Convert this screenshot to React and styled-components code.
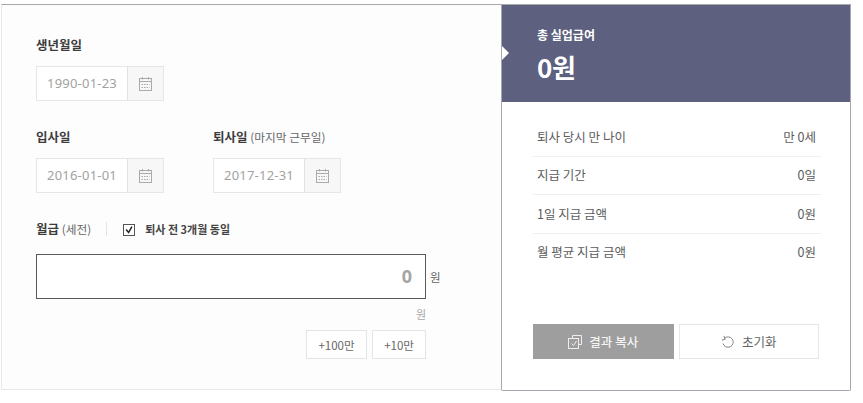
import React from "react";
import styled, { createGlobalStyle } from "styled-components";

const GlobalStyle = createGlobalStyle`
  html, body { margin: 0; padding: 0; background: #fff; }
  body { font-family: "Noto Sans CJK KR", "Noto Sans", sans-serif; color: #444; }
  * { box-sizing: border-box; }
`;

const Page = styled.div`
  width: 863px;
  height: 403px;
  padding: 4px 11px 0 1px;
  overflow: hidden;
`;

const Card = styled.div`
  display: flex;
  width: 851px;
  height: 387px;
`;

const Form = styled.div`
  width: 500px;
  height: 386px;
  background: #fdfdfd;
  border-top: 1px solid #a8a8a8;
  border-left: 1px solid #e8e8e8;
  border-bottom: 1px solid #e8e8e8;
  padding: 30px 0 0 34px;
`;

const FieldRow = styled.div`
  display: flex;
  gap: 49px;
  margin-bottom: 26px;
`;

const Field = styled.div`
  display: flex;
  flex-direction: column;
  gap: 11px;
`;

const Label = styled.div`
  font-size: 12.5px;
  line-height: 20px;
  font-weight: 700;
  color: #3c3c3c;
  height: 20px;
  white-space: nowrap;

  span {
    font-size: 11.7px;
    font-weight: 400;
    color: #666;
  }
`;

const DateGroup = styled.div`
  display: flex;
  width: 128px;
  height: 35px;
  border: 1px solid #e6e6e6;
  background: #fff;
`;

const DateValue = styled.div`
  flex: 1;
  font-size: 13px;
  line-height: 32px;
  color: #a2a2a2;
  text-align: center;
  letter-spacing: 0.2px;
  font-family: "Noto Sans", sans-serif;
`;

const DateAddon = styled.div`
  width: 36px;
  display: flex;
  align-items: center;
  justify-content: center;
  background: #f7f7f7;
  border-left: 1px solid #e2e2e2;
`;

const SalaryHead = styled.div`
  display: flex;
  align-items: center;
  height: 20px;
  margin-bottom: 15px;
`;

const Divider = styled.i`
  width: 1px;
  height: 14px;
  background: #e4e4e4;
  margin: 0 16px 0 15px;
`;

const CheckBox = styled.span`
  width: 12px;
  height: 12px;
  border: 1px solid #555;
  background: #fff;
  margin-right: 10px;
  position: relative;
  top: 1px;
  display: flex;
  align-items: center;
  justify-content: center;
`;

const CheckLabel = styled.span`
  font-size: 11px;
  font-weight: 700;
  color: #444;
`;

const SalaryRow = styled.div`
  display: flex;
  align-items: center;
  gap: 4px;
`;

const SalaryInput = styled.div`
  width: 390px;
  height: 45px;
  border: 1px solid #5a5a5a;
  background: #fff;
  display: flex;
  align-items: center;
  justify-content: flex-end;
  padding: 0 13px 1px 0;
  font-family: "Noto Sans", sans-serif;
  font-size: 18px;
  font-weight: 700;
  color: #a5a5a5;
`;

const Unit = styled.span`
  font-size: 11.5px;
  color: #666;
`;

const SubUnit = styled.div`
  width: 390px;
  text-align: right;
  font-size: 11px;
  line-height: 16px;
  color: #a8a8a8;
  margin: 7px 0 8px;
`;

const QuickRow = styled.div`
  width: 390px;
  display: flex;
  justify-content: flex-end;
  gap: 5px;
`;

const QuickButton = styled.button`
  width: ${(p) => p.$w}px;
  height: 29px;
  padding: 0;
  border: 1px solid #e4e4e4;
  background: #fff;
  font-family: inherit;
  font-size: 11.5px;
  color: #666;
`;

const Result = styled.div`
  width: 350px;
  height: 387px;
  background: #fff;
  border: 1px solid #a6a6ae;
  border-top-color: #a8a8a8;
  border-radius: 0 0 2px 2px;
  display: flex;
  flex-direction: column;
`;

const Summary = styled.div`
  height: 97px;
  background: #5d607e;
  color: #fff;
  padding: 20px 0 0 35px;
  position: relative;

  &::before {
    content: "";
    position: absolute;
    left: 0;
    top: 41px;
    border-left: 7px solid #fff;
    border-top: 7px solid transparent;
    border-bottom: 7px solid transparent;
  }
`;

const SummaryTitle = styled.div`
  font-size: 12px;
  line-height: 20px;
  font-weight: 700;
`;

const SummaryValue = styled.div`
  font-size: 26px;
  line-height: 32px;
  margin-top: 6px;
  font-weight: 700;
  letter-spacing: -0.3px;
`;

const DetailList = styled.div`
  margin: 16px 31px 0;
  width: 288px;
`;

const DetailRow = styled.div`
  height: 38.5px;
  padding: 0 5px 1px 4px;
  display: flex;
  align-items: center;
  justify-content: space-between;
  font-size: 12.5px;
  color: #5c5c5c;
  border-bottom: 1px solid ${(p) => (p.$last ? "transparent" : "#f0f0f0")};
`;

const ActionRow = styled.div`
  margin: auto 31px 31px;
  display: flex;
  gap: 5px;
`;

const ActionButton = styled.button`
  width: 141px;
  height: 35px;
  padding: 0;
  border: 1px solid ${(p) => (p.$primary ? "#9e9e9e" : "#e6e6e6")};
  background: ${(p) => (p.$primary ? "#9e9e9e" : "#fff")};
  color: ${(p) => (p.$primary ? "#f4f4f4" : "#666")};
  font-family: inherit;
  font-size: 12.5px;
  font-weight: ${(p) => (p.$primary ? 500 : 400)};
  display: flex;
  align-items: center;
  justify-content: center;
  gap: 7px;
`;

function CalendarIcon() {
  return (
    <svg width="13" height="14" viewBox="0 0 13 14" fill="none" stroke="#aaa" strokeWidth="1">
      <rect x="0.5" y="1.5" width="12" height="12" />
      <path d="M0.5 4.500h12M3.500 0v2.500M9.500 0v2.500" />
      <path d="M2.500 7.500h8M2.500 10.500h8" strokeDasharray="1.500 1" />
    </svg>
  );
}

function CopyIcon() {
  return (
    <svg width="14" height="14" viewBox="0 0 14 14" fill="none" stroke="#eee" strokeWidth="1">
      <path d="M4.500 3V0.500h9v9H11" />
      <rect x="0.500" y="3.500" width="10" height="10" />
      <path d="M3.500 8.500l2 2 3-4.500" />
    </svg>
  );
}

function ResetIcon() {
  return (
    <svg width="14" height="14" viewBox="0 0 14 14" fill="none" stroke="#888" strokeWidth="1">
      <path d="M3.500 3.200A5.200 5.200 0 1 1 2 8.500" />
      <path d="M0.500 4.500h3.500V1" transform="rotate(-20 3 4)" />
    </svg>
  );
}

function DateField({ value }) {
  return (
    <DateGroup>
      <DateValue>{value}</DateValue>
      <DateAddon>
        <CalendarIcon />
      </DateAddon>
    </DateGroup>
  );
}

const details = [
  ["퇴사 당시 만 나이", "만 0세"],
  ["지급 기간", "0일"],
  ["1일 지급 금액", "0원"],
  ["월 평균 지급 금액", "0원"],
];

export default function App() {
  return (
    <Page>
      <GlobalStyle />
      <Card>
        <Form>
          <FieldRow>
            <Field>
              <Label>생년월일</Label>
              <DateField value="1990-01-23" />
            </Field>
          </FieldRow>
          <FieldRow>
            <Field>
              <Label>입사일</Label>
              <DateField value="2016-01-01" />
            </Field>
            <Field>
              <Label>
                퇴사일 <span>(마지막 근무일)</span>
              </Label>
              <DateField value="2017-12-31" />
            </Field>
          </FieldRow>
          <SalaryHead>
            <Label>
              월급 <span>(세전)</span>
            </Label>
            <Divider />
            <CheckBox>
              <svg width="12" height="12" viewBox="0 0 12 12" fill="none" stroke="#222" strokeWidth="1.8">
                <path d="M2.500 5.500l3 3.500 4-7" />
              </svg>
            </CheckBox>
            <CheckLabel>퇴사 전 3개월 동일</CheckLabel>
          </SalaryHead>
          <SalaryRow>
            <SalaryInput>0</SalaryInput>
            <Unit>원</Unit>
          </SalaryRow>
          <SubUnit>원</SubUnit>
          <QuickRow>
            <QuickButton $w={61}>+100만</QuickButton>
            <QuickButton $w={54}>+10만</QuickButton>
          </QuickRow>
        </Form>
        <Result>
          <Summary>
            <SummaryTitle>총 실업급여</SummaryTitle>
            <SummaryValue>0원</SummaryValue>
          </Summary>
          <DetailList>
            {details.map(([name, value], i) => (
              <DetailRow key={name} $last={i === details.length - 1}>
                <span>{name}</span>
                <span>{value}</span>
              </DetailRow>
            ))}
          </DetailList>
          <ActionRow>
            <ActionButton $primary>
              <CopyIcon />
              결과 복사
            </ActionButton>
            <ActionButton>
              <ResetIcon />
              초기화
            </ActionButton>
          </ActionRow>
        </Result>
      </Card>
    </Page>
  );
}
